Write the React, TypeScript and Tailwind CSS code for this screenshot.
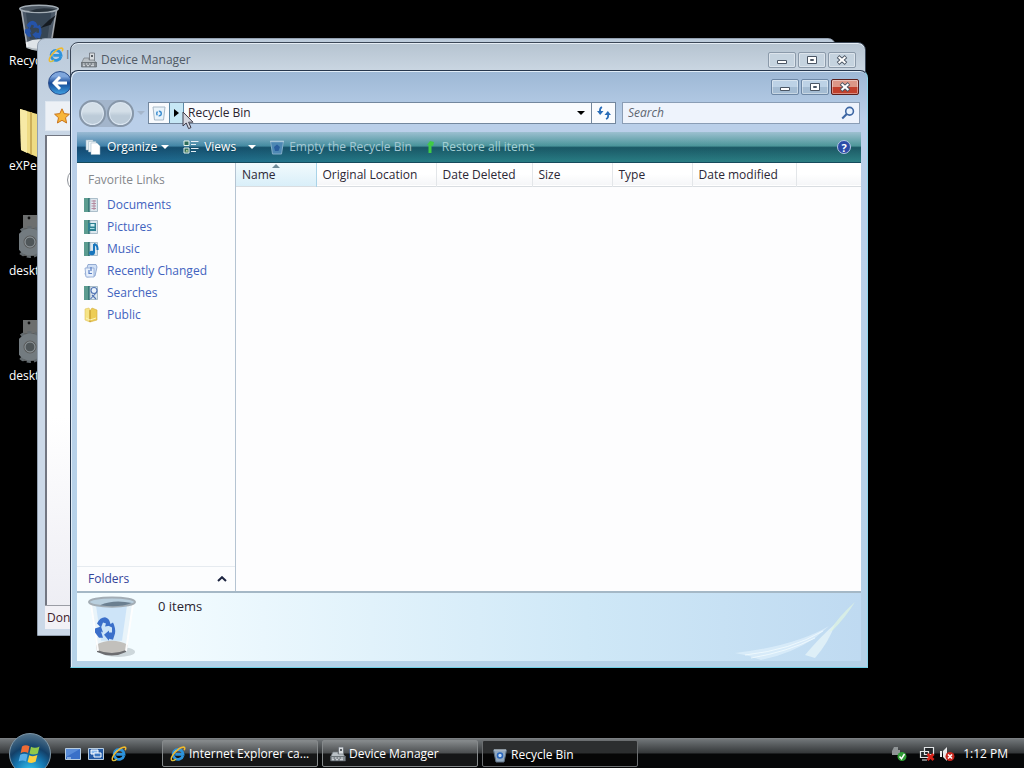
import type { ReactNode } from "react";
import clsx from "clsx";

/* ---------- icons ---------- */

const BinIcon = ({ className, dark = false }: { className?: string; dark?: boolean }) => (
  <svg viewBox="0 0 48 60" className={className} aria-hidden="true" preserveAspectRatio="none">
    <ellipse cx="30" cy="55" rx="17" ry="5" fill="#5c6670" opacity={dark ? 0 : 0.25} />
    <path d="M2 6 L9 54 Q24 62 38 54 L46 6 Z" fill={dark ? "#59697a" : "#e6f2f9"} opacity="0.85" />
    <path d="M8 9 L13 44 L34 44 L39 9 Z" fill={dark ? "#31404f" : "#c5e0f8"} opacity="0.8" />
    <path d="M8 48 Q24 40 40 48 L38 54 Q24 62 9 54 Z" fill={dark ? "#dfe4e8" : "#c2c0bc"} />
    <path d="M9 53 Q24 59 38 53 L38 55 Q24 62 9 55 Z" fill={dark ? "#aeb6bc" : "#6c6d70"} />
    <path d="M3 8 L10 54 M45 8 L38 54" stroke="#fff" strokeWidth="2" opacity={dark ? 0.5 : 0.95} />
    <ellipse cx="24" cy="6" rx="23" ry="4.5" fill={dark ? "#4b5661" : "#b9cfde"} stroke="#a3adb5" strokeWidth="2" />
    <path d="M12 9 Q26 3 44 7 Q30 12 12 9Z" fill={dark ? "#27313a" : "#6b7f90"} />
    <g fill={dark ? "#2553a8" : "#3b6fca"}>
      <path d="M9 27 Q12 21 17 21 Q21 22 22 26 L23 29 L17 30 L18 27 L15 26 L13 31 Z" />
      <path d="M7 32 L13 30 L15 36 L13 35 L15 41 L11 41 L7 36 Z" />
      <path d="M16 38 L21 34 L21 36 L24 36 L24 31 L20 29 L25 26 Q28 32 27 37 L25 43 L21 42 L21 44 Z" />
    </g>
    {dark && <path d="M36 20 L44 14 L38 26 L26 30 Z" fill="#151a20" />}
  </svg>
);

const IeIcon = ({ className }: { className?: string }) => (
  <svg viewBox="0 0 16 16" className={className} aria-hidden="true">
    <path
      d="M12.9 9.8 A5 5 0 1 1 13.1 8.3 L5.2 8.3"
      fill="none"
      stroke="#2d93dc"
      strokeWidth="2.8"
    />
    <path d="M3.6 7.2 Q5 3.6 8.6 4" fill="none" stroke="#8fd2f7" strokeWidth="1" />
    <path
      d="M2 14.6 Q-0.3 12.6 4.6 6.8 Q9.6 1.2 13.6 1 Q15.6 1.2 14.2 4.2"
      fill="none"
      stroke="#efb92c"
      strokeWidth="1.5"
    />
    <path d="M2 14.6 Q4 15 6 13" fill="none" stroke="#d5bf3e" strokeWidth="1.2" />
  </svg>
);

const DeviceIcon = ({ className }: { className?: string }) => (
  <svg viewBox="0 0 16 16" className={className} aria-hidden="true">
    <path d="M8.5 1 h5 v8 h-5 z" fill="#d8dcdf" stroke="#697077" strokeWidth="0.8" />
    <path d="M10 3 h2 v2 h-2 z" fill="#5a6066" />
    <path d="M3 6 L8 6 L8 8 L13 8 L15.5 11 L0.5 11 Z" fill="#b9c0c5" stroke="#737a80" strokeWidth="0.7" />
    <path d="M0.5 10.5 h15 v4.5 h-15 z" fill="#838a90" stroke="#565c61" strokeWidth="0.6" />
    <path d="M2 12 h1.5 M5 12 h1.5 M8 12 h1.5 M11 12 h2 M2 13.7 h2 M6 13.7 h2 M10 13.7 h3" stroke="#e8ecef" strokeWidth="0.9" />
  </svg>
);

const FolderLargeIcon = () => (
  <svg viewBox="0 0 40 48" className="h-12 w-10" aria-hidden="true">
    <path d="M1 0 L18 5 L18 48 L2 41 Z" fill="#eedb84" />
    <path d="M1 0 L8 2 L8 44 L2 41 Z" fill="#f7eaa6" />
    <path d="M11 3 L13 3 L13 46 L11 45 Z" fill="#cdb05a" />
    <path d="M18 3 L38 6 L38 42 L18 48 Z" fill="#e3c766" />
  </svg>
);

const GearFileIcon = () => (
  <svg viewBox="0 0 44 46" className="h-[46px] w-11" aria-hidden="true">
    <path d="M4 1 H40 V42 H4 Z" fill="#5b5d5d" />
    <path d="M4 1 H40 V14 H4 Z" fill="#6c6e6e" />
    <circle cx="10" cy="4" r="1.4" fill="#111" />
    <circle cx="11" cy="28" r="14" fill="none" stroke="#62696d" strokeWidth="4" strokeDasharray="4 3" />
    <circle cx="11" cy="28" r="10" fill="none" stroke="#737b80" strokeWidth="7" />
    <circle cx="11" cy="28" r="5" fill="#4f5659" stroke="#959da2" strokeWidth="1" />
  </svg>
);

const SidebarIcon = ({ kind }: { kind: string }) => {
  if (kind === "recent") {
    return (
      <svg viewBox="0 0 16 16" className="size-4" aria-hidden="true">
        <path d="M5 1.5 L13 1.5 L14 4 L12 13 L4 14 L2 11 Z" fill="#cfdff5" stroke="#7f9bc9" strokeWidth="0.8" />
        <path d="M2 5 H11 V14 H3 Z" fill="#e6effb" stroke="#8aa5d2" strokeWidth="0.8" />
        <path d="M6 7 V10.5 H9 M8 4 V8" fill="none" stroke="#5a7fc4" strokeWidth="1.2" />
      </svg>
    );
  }
  if (kind === "public") {
    return (
      <svg viewBox="0 0 16 16" className="size-4" aria-hidden="true">
        <path d="M2 2 L6 1 L7 3 L7 15 L2 13 Z" fill="#f6e486" stroke="#e0c25c" strokeWidth="0.6" />
        <path d="M7 4 L9 1 L14 3 L14 13 L7 15 Z" fill="#edcd55" stroke="#d3ad3e" strokeWidth="0.6" />
        <path d="M7 3 V15" stroke="#c59c2c" />
        <path d="M3 11 L7 13 L13 11" fill="none" stroke="#fbf3ba" />
      </svg>
    );
  }
  return (
    <svg viewBox="0 0 16 16" className="size-4" aria-hidden="true">
      <path d="M1 1 H7 V15 H1 Z" fill="#5c9c90" />
      <path d="M5 1 H7 V15 H5 Z" fill="#387a78" />
      <path d="M7 1.5 H14.5 V14.5 H7 Z" fill="#dce7ee" stroke="#9bb0bf" strokeWidth="0.8" />
      {kind === "documents" && (
        <path d="M8.5 4 H13 M8.5 6.5 H13 M8.5 9 H13 M8.5 11.5 H13 M11 3 V13" stroke="#b2859a" strokeWidth="0.9" />
      )}
      {kind === "pictures" && (
        <>
          <path d="M5 4 H13 V12 H5 Z" fill="#2c8091" />
          <path d="M7.5 5 H11.5 V7.5 H7.5 Z" fill="#cfeef4" />
          <path d="M7 9.5 H11.5" stroke="#a6dce4" />
        </>
      )}
      {kind === "music" && (
        <>
          <path d="M11 3 V12 M11 3 Q15 4 14.5 9" fill="none" stroke="#1876bd" strokeWidth="2" />
          <ellipse cx="9" cy="12" rx="2.8" ry="2.2" fill="#1876bd" />
        </>
      )}
      {kind === "searches" && (
        <>
          <circle cx="11" cy="5.5" r="3" fill="#eaf3fb" stroke="#5375b4" strokeWidth="1.1" />
          <path d="M7.5 14 L13 8 M9 10 L13 14" stroke="#5375b4" strokeWidth="1.1" />
        </>
      )}
    </svg>
  );
};

const Caret = ({ className }: { className?: string }) => (
  <svg viewBox="0 0 8 4" className={clsx("h-1 w-2", className)} aria-hidden="true">
    <path d="M0 0 H8 L4 4 Z" fill="currentColor" />
  </svg>
);

/* ---------- window chrome ---------- */

const WindowButtons = ({ active = false }: { active?: boolean }) => {
  const base = clsx(
    "flex h-4 w-7 items-center justify-center rounded-xs border shadow-[inset_0_0_0_1px_#ffffff66]",
    active
      ? "border-[#6d87a5] bg-linear-to-b from-[#bdd2e6] from-50% to-[#a4bcd3] to-50%"
      : "border-[#8b9aaa] bg-[#c5d3df]"
  );
  return (
    <div className="flex gap-0.5">
      <button type="button" aria-label="Minimize" className={base}>
        <svg viewBox="0 0 12 10" className="h-2.5 w-3">
          <path d="M1.5 5.5 H10.5 V8.5 H1.5 Z" fill="#fff" stroke="#4b5664" />
        </svg>
      </button>
      <button type="button" aria-label="Maximize" className={base}>
        <svg viewBox="0 0 12 10" className="h-2.5 w-3">
          <path d="M1.5 1.5 H10.5 V8.5 H1.5 Z" fill="#fff" stroke="#4b5664" />
          <path d="M4.5 4.5 H7.5 V5.5 H4.5 Z" fill="none" stroke="#4b5664" />
        </svg>
      </button>
      <button
        type="button"
        aria-label="Close"
        className={
          active
            ? "flex h-4 w-7 items-center justify-center rounded-xs border border-[#5b1f1c] bg-linear-to-b from-[#dc9787] from-50% to-[#c1402c] to-50% shadow-[inset_0_0_0_1px_#ffffff66]"
            : base
        }
      >
        <svg viewBox="0 0 12 10" className="h-2.5 w-3">
          <path d="M2 1.5 L10 8.5 M10 1.5 L2 8.5" stroke="#4b5664" strokeWidth="3.8" />
          <path d="M2.6 2 L9.4 8 M9.4 2 L2.6 8" stroke="#fff" strokeWidth="2" />
        </svg>
      </button>
    </div>
  );
};

const desktopItems: { label: string; icon: ReactNode }[] = [
  { label: "Recycle Bin", icon: <BinIcon dark className="h-12 w-10" /> },
  { label: "eXPerience", icon: <FolderLargeIcon /> },
  { label: "desktop.ini", icon: <GearFileIcon /> },
  { label: "desktop.ini", icon: <GearFileIcon /> },
];

const DesktopIcons = () => (
  <ul className="flex flex-col pt-1 pl-[9px] text-white">
    {desktopItems.map((item, i) => (
      <li key={i} className="flex h-[105px] w-[70px] flex-col">
        <span className="flex h-12 pl-[10px]">{item.icon}</span>
        <span className="whitespace-nowrap leading-[18px]">{item.label}</span>
      </li>
    ))}
  </ul>
);

const ExplorerWindow = () => (
  <section className="absolute top-[38px] left-[37px] flex h-[598px] w-[799px] flex-col rounded-t-lg border border-[#93a0b0] bg-linear-to-b from-[#bccbdb] to-[#ccd9e8] to-20% px-[7px] pb-[6px]">
    <header className="flex h-8 items-center gap-[2px] pl-[3px] text-[#6c7683]">
      <IeIcon className="size-4" />
      <span>I</span>
    </header>
    <div className="flex h-7 items-start pl-[3px]">
      <button
        type="button"
        aria-label="Back"
        className="flex size-6 items-center justify-center rounded-full border border-[#2b4d8a] bg-linear-to-b from-[#7fa6dc] from-20% via-[#174a97] via-50% to-[#3f9fe0]"
      >
        <svg viewBox="0 0 16 16" className="size-4">
          <path d="M8 2 L2 8 L8 14 M2.5 8 H15" fill="none" stroke="#fff" strokeWidth="3" />
        </svg>
      </button>
    </div>
    <div className="mt-0.5 flex h-[30px] items-center border border-[#dfe7f0] bg-[#edf1f6] pl-2">
      <svg viewBox="0 0 16 16" className="size-4">
        <path
          d="M8 0.8 L10.2 5.6 L15.4 6.2 L11.5 9.7 L12.6 15 L8 12.3 L3.4 15 L4.5 9.7 L0.6 6.2 L5.8 5.6 Z"
          fill="#f7b63a"
          stroke="#c9741c"
        />
      </svg>
    </div>
    <div className="mt-1 flex-1 border-t border-l-2 border-[#727681] bg-linear-to-b from-white from-60% to-[#eeeef4] pt-8 pl-5">
      <div className="h-6 w-6 rounded-full border border-[#8d9198]" />
    </div>
    <footer className="flex h-6 items-center border-t border-[#9b9da5] bg-[#f2f1f6] pl-[2px] text-[#40202c]">Done</footer>
  </section>
);

const DeviceManagerWindow = () => (
  <section className="absolute top-[42px] left-[70px] h-[560px] w-[796px] rounded-t-lg border border-[#3a4656] bg-linear-to-b from-[#b5c3d0] to-[#cad6e2] to-5% px-[9px] shadow-[inset_0_1px_0_#e5edf5]">
    <header className="flex h-[34px] items-center pl-px">
      <DeviceIcon className="size-4" />
      <h2 className="flex-1 pl-1 text-[#505a66]">Device Manager</h2>
      <WindowButtons />
    </header>
  </section>
);

const AddressBar = () => (
  <div className="flex h-[30px] items-center pr-px pl-0.5">
    <div className="flex gap-px rounded-full bg-[#a3b5cb]">
      {["Back", "Forward"].map((label) => (
        <button
          key={label}
          type="button"
          aria-label={label}
          className="size-[27px] rounded-full border-2 border-[#8797a9] bg-linear-to-b from-[#d4dfe8] from-40% to-[#bccbd8] to-60% shadow-[inset_0_0_0_1px_#dce7f2]"
        />
      ))}
    </div>
    <Caret className="ml-[3px] text-[#a5b6cb]" />
    <div className="ml-[3px] flex h-[22px] flex-1 items-center border border-[#73879e] bg-[#f9fbfe]">
      <span className="flex h-full w-5 items-center justify-center">
        <svg viewBox="0 0 16 16" className="size-4" aria-hidden="true">
          <path d="M2 2 H14 L12.5 15 H3.5 Z" fill="#e8f3fb" stroke="#a7b9c8" />
          <circle cx="8" cy="8.5" r="2.3" fill="none" stroke="#3b8dd0" strokeWidth="1.4" strokeDasharray="3.6 1.2" />
        </svg>
      </span>
      <button
        type="button"
        aria-label="Show locations"
        className="flex h-full w-[15px] items-center justify-center border-x border-[#5a88a6] bg-[#c6e7f5]"
      >
        <svg viewBox="0 0 5 8" className="h-2 w-[5px]">
          <path d="M0 0 L5 4 L0 8 Z" fill="#000" />
        </svg>
      </button>
      <span className="flex-1 pl-1 text-[#2b2430]">Recycle Bin</span>
      <button type="button" aria-label="Previous locations" className="flex h-full w-5 items-center justify-center text-black">
        <Caret />
      </button>
      <button type="button" aria-label="Refresh" className="flex h-full w-6 items-center justify-center border-l border-[#73879e]">
        <svg viewBox="0 0 16 16" className="size-4">
          <path d="M6 2 Q3.5 3 4 7" fill="none" stroke="#2a6db8" strokeWidth="1.8" />
          <path d="M1 6 H7.5 L4.2 10 Z" fill="#2a6db8" />
          <path d="M10 14 Q12.8 13 12 9" fill="none" stroke="#2a6db8" strokeWidth="1.8" />
          <path d="M8.5 10 H15 L11.8 6 Z" fill="#2a6db8" />
        </svg>
      </button>
    </div>
    <label className="ml-[6px] flex h-[22px] w-[238px] items-center border border-[#8a9db5] bg-[#eef3fc] pr-1">
      <input
        type="text"
        aria-label="Search"
        placeholder="Search"
        className="min-w-0 flex-1 bg-transparent pl-[5px] italic outline-none placeholder:text-[#5f6671]"
      />
      <svg viewBox="0 0 16 16" className="size-[14px]" aria-hidden="true">
        <circle cx="9.8" cy="6" r="4.4" fill="#e9f2fc" stroke="#3d66a3" strokeWidth="1.8" />
        <path d="M6.6 9.2 L1.4 14.4" stroke="#3d66a3" strokeWidth="2.4" />
      </svg>
    </label>
  </div>
);

const Toolbar = () => (
  <div className="mt-1 flex h-[31px] items-center border-b border-[#164a5c] bg-[linear-gradient(to_bottom,#b9cfe2cc_0%,#ffffff26_46%,#00183066_52%,#00203010_100%),linear-gradient(to_right,#1f6a9c,#28818a_40%,#2f8588)] pl-2 text-white">
    <button type="button" className="flex items-center text-shadow-[0_1px_1px_#00304080]">
      <svg viewBox="0 0 16 16" className="size-4" aria-hidden="true">
        <path d="M1 1 H8 V11 H1 Z" fill="#e4edf2" stroke="#9cb7c5" strokeWidth="0.5" />
        <path d="M3.5 2.5 H11 V13 H3.5 Z" fill="#eef4f7" stroke="#9cb7c5" strokeWidth="0.5" />
        <path d="M6 4 H12 L15 7 V15.5 H6 Z" fill="#fff" stroke="#9cb7c5" strokeWidth="0.5" />
      </svg>
      <span className="pr-1 pl-[6px]">Organize</span>
      <Caret />
    </button>
    <button type="button" className="ml-[14px] flex items-center text-shadow-[0_1px_1px_#00304080]">
      <svg viewBox="0 0 16 16" className="size-4" aria-hidden="true">
        <path d="M1 2 H6 V6.5 H1 Z M1 9 H6 V14 H1 Z" fill="#2d6c5a" stroke="#e9f4ee" />
        <path d="M2.5 12.5 L4 10.5 L5 12.5 Z" fill="#e5efaf" />
        <path d="M8 2.5 H15.5 M8 5.5 H13 M8 9.5 H15.5 M8 12.5 H13" stroke="#e3eef4" strokeWidth="1.2" />
      </svg>
      <span className="pr-3 pl-[5px]">Views</span>
      <Caret />
    </button>
    <button type="button" className="ml-[13px] flex items-center text-[#a4c8d4]">
      <svg viewBox="0 0 16 16" className="size-4" aria-hidden="true">
        <path d="M1.5 2 H14.5 L12.5 15 H3.5 Z" fill="#4d88b4" stroke="#82adc8" />
        <path d="M1 2.5 H15" stroke="#a9c8d9" strokeWidth="1.4" />
        <path d="M5 8 L8 5.5 L11 8 L9.5 12 H6 Z" fill="#2a5f9e" />
      </svg>
      <span className="pl-1">Empty the Recycle Bin</span>
    </button>
    <button type="button" className="ml-[10px] flex items-center text-[#a4d0d4]">
      <svg viewBox="0 0 16 16" className="size-4" aria-hidden="true">
        <path d="M8 14 V5" fill="none" stroke="#3fcb45" strokeWidth="3" />
        <path d="M5 6 L8 2 L12 3 L11 7 L8 6 Z" fill="#3fcb45" />
      </svg>
      <span className="pl-1">Restore all items</span>
    </button>
    <button
      type="button"
      aria-label="Help"
      className="mr-[10px] ml-auto flex size-[14px] items-center justify-center rounded-full border border-[#b6c6e6] bg-[#2b4ba8] text-[11px] font-bold leading-none"
    >
      ?
    </button>
  </div>
);

const favoriteLinks = [
  { label: "Documents", kind: "documents" },
  { label: "Pictures", kind: "pictures" },
  { label: "Music", kind: "music" },
  { label: "Recently Changed", kind: "recent" },
  { label: "Searches", kind: "searches" },
  { label: "Public", kind: "public" },
];

const Sidebar = () => (
  <nav className="flex w-[159px] shrink-0 flex-col border-r border-[#b5c4d2] bg-[#fcfdfe]">
    <h3 className="pt-2 pl-[11px] text-[#85888c] leading-[18px]">Favorite Links</h3>
    <ul className="pt-[5px]">
      {favoriteLinks.map((link) => (
        <li key={link.kind}>
          <a href="#" className="flex h-[22px] items-center pl-[6px] text-[#4263be]">
            <SidebarIcon kind={link.kind} />
            <span className="pl-2">{link.label}</span>
          </a>
        </li>
      ))}
    </ul>
    <button type="button" className="mt-auto flex h-[25px] items-center justify-between border-t border-[#e6ebf0] pr-2 pl-[11px] text-[#33449a]">
      Folders
      <svg viewBox="0 0 10 6" className="h-[6px] w-[10px]" aria-hidden="true">
        <path d="M1 5 L5 1.2 L9 5" fill="none" stroke="#1c2440" strokeWidth="2" />
      </svg>
    </button>
  </nav>
);

const columns = [
  { label: "Name", width: "w-20" },
  { label: "Original Location", width: "w-[120px]" },
  { label: "Date Deleted", width: "w-24" },
  { label: "Size", width: "w-20" },
  { label: "Type", width: "w-20" },
  { label: "Date modified", width: "w-[104px]" },
];

const FileList = () => (
  <div className="min-w-0 flex-1 bg-[#fdfdfe]">
    <table className="w-full table-fixed border-collapse text-left">
      <thead>
        <tr className="h-[23px] border-b border-[#d9dde1] bg-linear-to-b from-white from-50% to-[#f5f6f8]">
          {columns.map((col, i) => (
            <th
              key={col.label}
              scope="col"
              className={clsx(
                "relative border-r p-0 pt-px pl-[6px] font-normal whitespace-nowrap text-[#2c2735]",
                col.width,
                i === 0 ? "border-[#a9d3e8] bg-linear-to-b from-[#f2fafd] to-[#d9eff9]" : "border-[#e3e6e9]"
              )}
            >
              {col.label}
              {i === 0 && (
                <svg viewBox="0 0 8 4" className="absolute top-px left-9 h-1 w-2" aria-hidden="true">
                  <path d="M0 4 L4 0 L8 4 Z" fill="#6f8b99" />
                </svg>
              )}
            </th>
          ))}
          <th className="p-0" aria-label="Spacer" />
        </tr>
      </thead>
    </table>
  </div>
);

const DetailsPane = () => (
  <footer className="relative flex h-[70px] items-start border-t-2 border-[#a5b8c6] bg-linear-to-r from-[#f3fcff] from-10% via-[#cfe8f7] via-65% to-[#bfdaf1] pt-[3px] pl-[11px] text-[#2b2430]">
    <BinIcon className="h-[61px] w-12" />
    <p className="pt-px pl-[22px] text-[13px]">0 items</p>
    <svg viewBox="0 0 130 62" className="absolute right-0 bottom-px h-[62px] w-[130px]" aria-hidden="true">
      <path d="M4 55 Q64 48 98 28 L84 40 Q60 56 30 62 L18 58 Z" fill="#e5f4fd" opacity="0.6" />
      <path d="M14 57 Q60 52 92 33 M20 60 Q56 54 84 40" fill="none" stroke="#f7fdff" opacity="0.7" />
      <path d="M74 57 Q90 38 104 26 Q98 44 84 60 Z" fill="#e9f7fa" opacity="0.7" />
      <path d="M98 34 Q108 18 124 4 Q114 20 102 32 Z" fill="#dff3e2" opacity="0.75" />
    </svg>
  </footer>
);

const RecycleBinWindow = () => (
  <section className="absolute top-[70px] left-[70px] flex h-[598px] w-[798px] flex-col rounded-t-lg border border-[#26364c] border-r-[#8ed6ec] border-b-[#6fd0e6] bg-linear-to-b from-[#9db8d5] via-[#bacfe9] via-8% to-[#b5d2e8] px-[6px] pb-[6px] shadow-[inset_1px_1px_0_#e1edf8]">
    <header className="flex h-[27px] items-start justify-end pt-2 pr-[2px]">
      <WindowButtons active />
    </header>
    <AddressBar />
    <Toolbar />
    <div className="flex min-h-0 flex-1">
      <Sidebar />
      <FileList />
    </div>
    <DetailsPane />
  </section>
);

/* ---------- taskbar ---------- */

const tasks = [
  { label: "Internet Explorer ca...", icon: <IeIcon className="size-4 shrink-0" />, active: false },
  { label: "Device Manager", icon: <DeviceIcon className="size-4 shrink-0" />, active: false },
  {
    label: "Recycle Bin",
    icon: (
      <svg viewBox="0 0 16 16" className="size-4 shrink-0" aria-hidden="true">
        <path d="M1.5 3 H14.5 L12 15 H4 Z" fill="#92a9c0" stroke="#5e7183" />
        <path d="M2 3 H14" stroke="#d3dee7" />
        <circle cx="8" cy="8.5" r="2.5" fill="#c4ddf5" stroke="#2866bd" strokeWidth="1.6" />
      </svg>
    ),
    active: true,
  },
];

const StartButton = () => (
  <button
    type="button"
    aria-label="Start"
    className="absolute -top-[6px] left-[9px] flex size-[42px] items-center justify-center rounded-full border border-[#7d97a9] bg-[radial-gradient(circle_at_50%_95%,#37c8f0_0%,#1578b3_35%,#134068_58%,#6c8799_100%)]"
  >
    <svg viewBox="0 0 24 24" className="size-6">
      <path d="M4 4.5 Q7.5 2 11.5 4.2 L10 11 Q6.5 9 2.6 11.2 Z" fill="#ee6b35" />
      <path d="M13 4.8 Q17 7 21.5 4.6 L19.8 11.4 Q15.5 13.5 11.5 11.6 Z" fill="#92c94a" />
      <path d="M2.2 12.8 Q6 10.6 9.7 12.6 L8 19.4 Q4.5 17.4 0.6 19.6 Z" fill="#58aee8" />
      <path d="M11.2 13.2 Q15 15.2 19.4 13 L17.6 19.8 Q13.5 22 9.6 20 Z" fill="#fbcf3e" />
    </svg>
  </button>
);

const Taskbar = () => (
  <footer className="relative flex h-[30px] items-center border-t border-[#7b7f82] bg-linear-to-b from-[#72777a] via-[#35383a] via-48% to-[#060708] to-52% text-white">
    <StartButton />
    <div className="flex w-[162px] gap-[7px] pl-[65px]">
      <button type="button" aria-label="Show desktop">
        <svg viewBox="0 0 16 16" className="size-4">
          <path d="M0.5 2.5 H15.5 V13.5 H0.5 Z" fill="#3a70c8" stroke="#b6cce0" />
          <path d="M1 3 H15 L1 11 Z" fill="#6798de" opacity="0.7" />
          <path d="M2 12 H6" stroke="#cde5fa" />
        </svg>
      </button>
      <button type="button" aria-label="Switch windows">
        <svg viewBox="0 0 16 16" className="size-4">
          <path d="M0.5 2.5 H15.5 V13.5 H0.5 Z" fill="#245aa4" stroke="#b6cce0" />
          <path d="M3 4 H10 V8 H3 Z" fill="#8ebcef" stroke="#fff" />
          <path d="M6 7 H13 V11 H6 Z" fill="#3b78c4" stroke="#fff" />
        </svg>
      </button>
      <button type="button" aria-label="Internet Explorer">
        <IeIcon className="size-4" />
      </button>
    </div>
    <div className="flex flex-1 gap-1">
      {tasks.map((task) => (
        <button
          key={task.label}
          type="button"
          className={clsx(
            "flex h-[27px] w-full max-w-[156px] items-center gap-[3px] rounded-xs border whitespace-nowrap",
            task.active
              ? "border-[#6b6e70] bg-linear-to-b from-[#2c2e2f] from-48% to-[#060606] to-52% pt-0.5 pl-[9px]"
              : "border-[#85898b] bg-linear-to-b from-[#85898b] via-[#4b4e50] via-48% to-[#151617] to-52% pl-[7px]"
          )}
        >
          {task.icon}
          {task.label}
        </button>
      ))}
    </div>
    <div className="flex items-center pr-4">
      <svg viewBox="0 0 16 16" className="mr-3 size-4" aria-label="Safely remove hardware">
        <path d="M3 1 H7 V4 H9 V9 H1 V5 Z" fill="#8f9496" />
        <circle cx="11" cy="10.5" r="4.5" fill="#2f9c35" />
        <path d="M8.5 10.5 L10.5 12.8 L13.5 8" fill="none" stroke="#fff" strokeWidth="1.5" />
      </svg>
      <svg viewBox="0 0 16 16" className="mr-1 size-4" aria-label="Network disconnected">
        <path d="M5.5 1.5 H14.5 V8.5 H5.5 Z M1.5 5.5 H9.5 V11.5 H1.5 Z M3 14 H8" fill="#24282b" stroke="#e2e5e7" strokeWidth="1.2" />
        <path d="M8.5 8 L14.5 14 M14.5 8 L8.5 14" stroke="#d62319" strokeWidth="2.8" />
      </svg>
      <svg viewBox="0 0 16 16" className="mr-2 size-4" aria-label="Volume muted">
        <path d="M1 5 H3 V11 H1 Z M4 5 L8 1 V15 L4 11 Z" fill="#e7e9ea" />
        <circle cx="11" cy="10.5" r="4.5" fill="#c9281f" />
        <path d="M9 8.5 L13 12.5 M13 8.5 L9 12.5" stroke="#fff" strokeWidth="1.5" />
      </svg>
      <time>1:12 PM</time>
    </div>
  </footer>
);

const Cursor = () => (
  <svg viewBox="0 0 12 19" className="pointer-events-none absolute top-[111px] left-[182px] h-[19px] w-3" aria-hidden="true">
    <path d="M1 1 V15 L4.2 12 L6.6 17.6 L9 16.6 L6.6 11.2 H11 Z" fill="#d5d7e0" stroke="#3c3a48" />
  </svg>
);

export default function App() {
  return (
    <div className="flex min-h-screen flex-col overflow-hidden bg-black font-['Open_Sans','Noto_Sans',sans-serif] text-[12px] leading-[18px]">
      <main className="relative flex-1">
        <DesktopIcons />
        <ExplorerWindow />
        <DeviceManagerWindow />
        <RecycleBinWindow />
        <Cursor />
      </main>
      <Taskbar />
    </div>
  );
}
